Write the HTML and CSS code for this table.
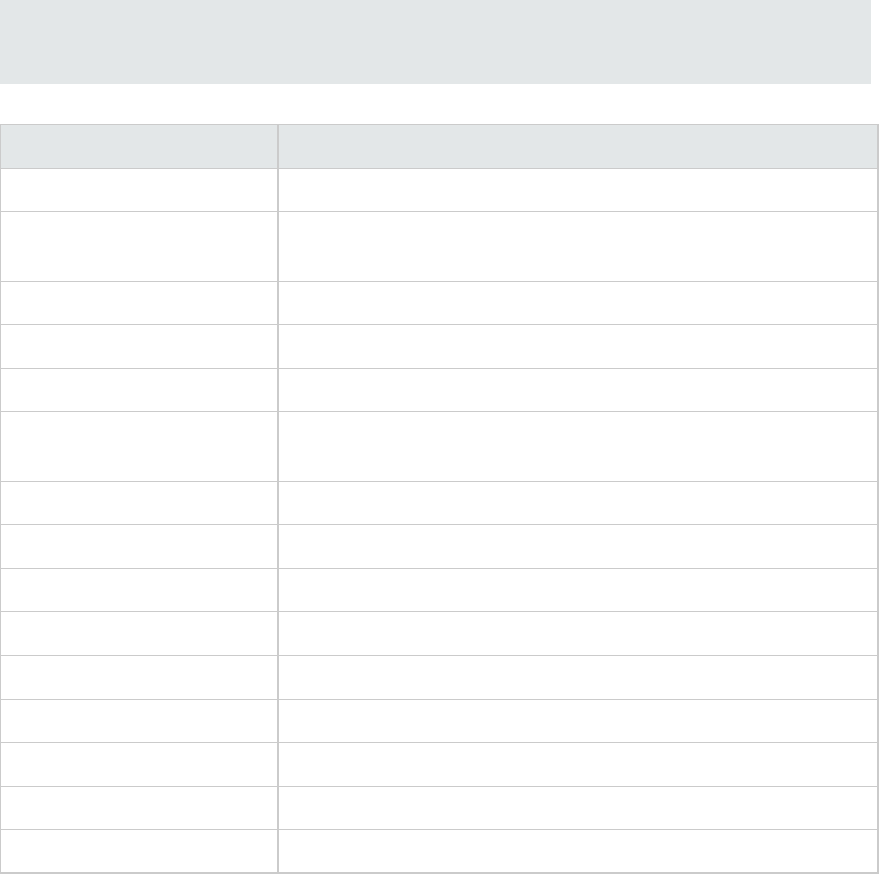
FILE: index.html
```html
<!DOCTYPE html>
<html lang="en">
<head>
<meta charset="utf-8">
<title>Table</title>
<link rel="stylesheet" href="styles.css">
</head>
<body>
<div class="banner"></div>
<div class="grid">
  <div class="row head"><div class="cell key"></div><div class="cell val"></div></div>
  <div class="row"><div class="cell key"></div><div class="cell val"></div></div>
  <div class="row tall"><div class="cell key"></div><div class="cell val"></div></div>
  <div class="row"><div class="cell key"></div><div class="cell val"></div></div>
  <div class="row"><div class="cell key"></div><div class="cell val"></div></div>
  <div class="row"><div class="cell key"></div><div class="cell val"></div></div>
  <div class="row tall"><div class="cell key"></div><div class="cell val"></div></div>
  <div class="row"><div class="cell key"></div><div class="cell val"></div></div>
  <div class="row"><div class="cell key"></div><div class="cell val"></div></div>
  <div class="row"><div class="cell key"></div><div class="cell val"></div></div>
  <div class="row"><div class="cell key"></div><div class="cell val"></div></div>
  <div class="row"><div class="cell key"></div><div class="cell val"></div></div>
  <div class="row"><div class="cell key"></div><div class="cell val"></div></div>
  <div class="row"><div class="cell key"></div><div class="cell val"></div></div>
  <div class="row"><div class="cell key"></div><div class="cell val"></div></div>
  <div class="row last"><div class="cell key"></div><div class="cell val"></div></div>
</div>
</body>
</html>
```
FILE: styles.css
```css
html, body {
  margin: 0;
  padding: 0;
  background: #ffffff;
  font-family: "Liberation Sans", Arial, sans-serif;
}
.banner {
  width: 871px;
  height: 84px;
  background: #e3e7e8;
}
.grid {
  margin-top: 40px;
  width: 879px;
  box-sizing: border-box;
  border-top: 1px solid #cbcbcb;
  border-left: 1px solid #cbcbcb;
  border-right: 2px solid #cbcbcb;
  display: flex;
  flex-direction: column;
}
.row {
  display: flex;
  height: 43.6px;
  box-sizing: border-box;
  border-bottom: 1px solid #cbcbcb;
}
.row.head {
  height: 43.7px;
  background: #e3e7e8;
}
.row.tall {
  height: 69.3px;
}
.row.last {
  border-bottom-width: 2px;
}
.cell.key {
  width: 276px;
  flex: none;
  border-right: 2px solid #cbcbcb;
}
.cell.val {
  flex: 1;
}
```
